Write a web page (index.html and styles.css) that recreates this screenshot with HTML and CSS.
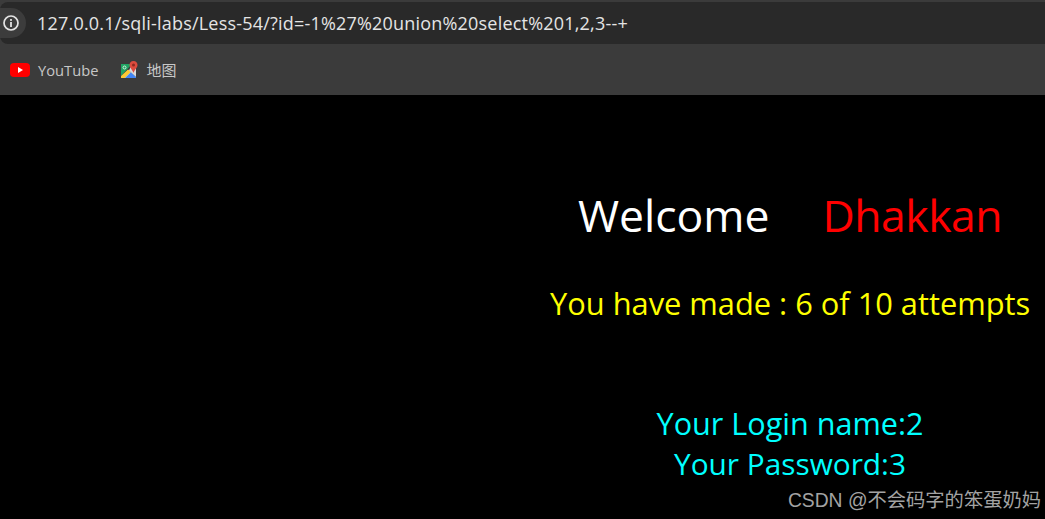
FILE: index.html
```html
<!DOCTYPE html>
<html lang="en">
<head>
<meta charset="utf-8">
<title>Less-54</title>
<link rel="stylesheet" href="styles.css">
</head>
<body>
<header class="chrome">
  <div class="urlbar">
    <div class="info">
      <svg width="18" height="18" viewBox="0 0 18 18" fill="none">
        <circle cx="9" cy="9" r="7" stroke="#e3e3e3" stroke-width="1.7"/>
        <rect x="8.1" y="8" width="1.8" height="5" fill="#e3e3e3"/>
        <rect x="8.1" y="5" width="1.8" height="1.9" fill="#e3e3e3"/>
      </svg>
    </div>
    <span class="url">127.0.0.1/sqli-labs/Less-54/?id=-1%27%20union%20select%201,2,3--+</span>
  </div>
  <nav class="bookmarks">
    <a class="bookmark">
      <svg width="20" height="14" viewBox="0 0 20 14">
        <rect x="0" y="0" width="20" height="14" rx="4" fill="#ff0000"/>
        <path d="M8 4 L13 7 L8 10 Z" fill="#fff"/>
      </svg>
      <span>YouTube</span>
    </a>
    <a class="bookmark">
      <svg width="18" height="18" viewBox="0 0 18 18">
        <path d="M1 3 H12 L1 15 Z" fill="#1fa463"/>
        <path d="M1 17 L8.5 9 L16 17 Z" fill="#fbfbfb"/>
        <path d="M1 17 V15 L8 8.5 L11 11 L5 17 Z" fill="#fcc934"/>
        <path d="M5 17 L11 11 L16 16 V17 Z" fill="#4285f4"/>
        <path d="M12 3 H16 V16 L9 9.5 Z" fill="#d9d9d9"/>
        <circle cx="4.5" cy="6.5" r="1.5" fill="none" stroke="#e8f5e9" stroke-width="0.9"/>
        <path d="M13.5 0 C10.9 0 9.5 2 9.5 4 C9.5 6.8 12.5 8.6 13.5 12 C14.5 8.6 17.5 6.8 17.5 4 C17.5 2 16.1 0 13.5 0 Z" fill="#dd4b3e"/>
        <circle cx="13.5" cy="4" r="1.5" fill="#8e2a21"/>
      </svg>
      <span class="cjk">地图</span>
    </a>
  </nav>
</header>
<main class="page">
  <div class="panel">
    <h1 class="welcome"><span class="white">Welcome</span><span class="red">Dhakkan</span></h1>
    <p class="attempts">You have made : 6 of 10 attempts</p>
    <div class="result">
      <p class="login">Your Login name:2</p>
      <p class="password">Your Password:3</p>
    </div>
  </div>
</main>
<div class="watermark">CSDN @不会码字的笨蛋奶妈</div>
</body>
</html>
```
FILE: styles.css
```css
* { box-sizing: border-box; }
html, body { margin: 0; height: 100%; }
body {
  background: #000;
  font-family: "Open Sans", "Noto Sans", "Noto Sans CJK SC", sans-serif;
  overflow: hidden;
  position: relative;
}
.chrome { background: #3b3b3b; height: 95px; padding-top: 2px; }
.urlbar {
  height: 42px;
  background: #292929;
  display: flex;
  align-items: center;
  border-radius: 8px 0 0 8px;
}
.info {
  width: 26px;
  height: 30px;
  background: #3c3c3c;
  border-radius: 0 15px 15px 0;
  display: flex;
  align-items: center;
  justify-content: flex-start;
  padding-left: 2px;
  flex: none;
}
.url {
  margin-left: 11px;
  color: #e4e4e4;
  font-size: 18px;
  letter-spacing: 0.2px;
  white-space: nowrap;
}
.bookmarks {
  height: 51px;
  display: flex;
  align-items: center;
  padding-left: 10px;
  gap: 22px;
}
.bookmark {
  display: flex;
  align-items: center;
  gap: 8px;
  color: #c7c7c7;
  font-size: 14.7px;
}
.cjk { font-family: "Noto Sans CJK SC", sans-serif; font-size: 15px; }
.page { display: flex; justify-content: flex-end; padding-right: 15px; }
.panel { width: 480px; text-align: center; }
.welcome {
  margin: 90px 0 0;
  font-size: 44.5px;
  font-weight: 400;
  line-height: 60px;
  display: flex;
  justify-content: center;
  gap: 53px;
}
.white { color: #fff; }
.red { color: #f00; letter-spacing: -0.5px; }
.attempts {
  margin: 38px 0 0;
  color: #ff0;
  font-size: 30.8px;
  line-height: 40px;
  white-space: nowrap;
}
.result {
  margin-top: 80px;
  color: #0ff;
  line-height: 40px;
}
.result p { margin: 0; }
.login { font-size: 30.6px; }
.password { font-size: 29.8px; line-height: 42px; }
.watermark {
  position: absolute;
  right: 4px;
  bottom: 6px;
  color: #a3a3a3;
  font-size: 19.3px;
  line-height: 24px;
  font-family: "Liberation Sans", "Noto Sans CJK SC", sans-serif;
  white-space: nowrap;
}
```
